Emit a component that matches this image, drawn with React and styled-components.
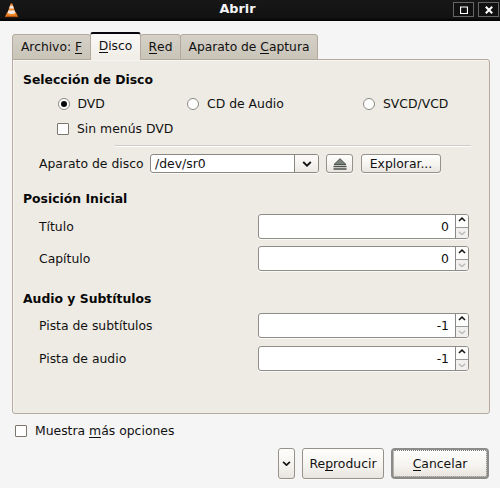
import React from "react";
import styled, { createGlobalStyle } from "styled-components";

const Global = createGlobalStyle`
  * { box-sizing: border-box; }
  body { margin: 0; background: #f5f5f5; overflow: hidden; }
`;

const Dialog = styled.div`
  width: 500px;
  height: 488px;
  background: #f5f5f5;
  color: #111;
  font: 12.4px/16px "DejaVu Sans", sans-serif;
  white-space: nowrap;
`;

const TitleBar = styled.header`
  display: grid;
  grid-template-columns: 46px 1fr 46px;
  height: 21px;
  padding-right: 1px;
  background: linear-gradient(#171717, #121212 85%, #000);
`;

const Cone = styled.svg`
  margin: 3px 0 0 4px;
  width: 15px;
  height: 15px;
`;

const Title = styled.h1`
  margin: 1px 0 0;
  padding-right: 24px;
  text-align: center;
  color: #f4f4f4;
  font-size: 12.8px;
  line-height: 16px;
`;

const WindowButtons = styled.div`
  display: flex;
  justify-content: flex-end;
  gap: 4px;
  padding-top: 2px;
`;

const WindowButton = styled.button`
  display: flex;
  align-items: center;
  justify-content: center;
  width: 21px;
  height: 15px;
  padding: 0;
  border: 1px solid #666;
  background: #111;
`;

const Tabs = styled.nav`
  display: flex;
  align-items: flex-end;
  height: 39px;
  margin: 0 0 -1px 12px;
`;

const Tab = styled.button`
  position: relative;
  width: ${(p) => p.$width}px;
  height: ${(p) => (p.$active ? 28 : 26)}px;
  margin-left: ${(p) => (p.$first ? 0 : -1)}px;
  padding: ${(p) => (p.$active ? "0 0 2px" : "0")};
  border: 1px solid #b3a89b;
  border-top: ${(p) => (p.$active ? "2px solid #08060c" : "1px solid #b3a89b")};
  border-bottom: ${(p) => (p.$active ? "0" : "1px solid #b3a89b")};
  border-radius: 3px 3px 0 0;
  background: ${(p) => (p.$active ? "linear-gradient(#fbfaf8, #f0ede6)" : "linear-gradient(#d5d1c7, #c9c4b8)")};
  color: inherit;
  font: inherit;
  font-size: 12.3px;
  z-index: ${(p) => (p.$active ? 1 : 0)};
`;

const Panel = styled.main`
  width: 478px;
  height: 355px;
  margin-left: 12px;
  padding: 10px 0 0 10px;
  border: 1px solid #b5aa9d;
  border-radius: 0 3px 3px 3px;
  background: #eeebe4;
  box-shadow: inset 1px 1px 0 #f7f5f1;
`;

const Heading = styled.h2`
  height: 20px;
  margin: ${(p) => p.$top || 0}px 0 0;
  color: #080808;
  font-size: 12.4px;
  line-height: 20px;
`;

const Radios = styled.div`
  display: grid;
  grid-template-columns: 129.5px 176px 1fr;
  height: 27px;
  margin-left: 34.5px;
`;

const Choice = styled.label`
  display: flex;
  align-items: center;
  gap: 8px;
`;

const Radio = styled.span`
  display: grid;
  place-items: center;
  width: 12px;
  height: 12px;
  border: 1px solid #8d8984;
  border-radius: 50%;
  background: #fff;
`;

const Dot = styled.i`
  width: 6px;
  height: 6px;
  border-radius: 50%;
  background: #080808;
`;

const Check = styled.span`
  width: 12px;
  height: 12px;
  border: 1px solid #7c766e;
  border-radius: 1px;
  background: #fff;
`;

const CheckRow = styled.div`
  display: flex;
  height: 24px;
  margin-left: 34px;
`;

const Separator = styled.hr`
  width: 356px;
  height: 2px;
  margin: 4px 0 0 92px;
  border: 0;
  border-top: 1px solid #cfccc7;
  background: #fdfdfc;
`;

const DeviceRow = styled.div`
  display: flex;
  align-items: center;
  height: 19px;
  margin: 7px 0 0 16px;
`;

const DeviceLabel = styled.span`
  width: 111px;
`;

const Combo = styled.div`
  display: flex;
  width: 169px;
  height: 19px;
  margin-right: 7px;
  overflow: hidden;
  border: 1px solid #8b8781;
  border-radius: 3px;
  background: #fff;
  box-shadow: 0 1px 0 #faf9f6;
`;

const ComboText = styled.span`
  flex: 1;
  padding-left: 4px;
  line-height: 17px;
`;

const Arrow = styled.span`
  display: grid;
  place-items: center;
  width: 24px;
  border-left: 1px solid #8b8781;
  background: linear-gradient(#fdfcfb, #edeae5);
`;

const Button = styled.button`
  display: flex;
  align-items: center;
  justify-content: center;
  width: ${(p) => p.$width}px;
  height: ${(p) => p.$height || 19}px;
  margin-right: ${(p) => p.$gap || 0}px;
  padding: 0;
  border: 1px solid #96918a;
  border-radius: 3px;
  background: linear-gradient(#fefefd, #f5f3ef 60%, #e8e4de);
  box-shadow: 0 1px 0 #faf9f6;
  color: inherit;
  font: inherit;
`;

const FocusButton = styled(Button)`
  border: 2px solid #8b8b87;
  border-radius: 4px;
  outline: 1px dotted #777;
  outline-offset: -3px;
`;

const SpinRow = styled.div`
  display: flex;
  align-items: center;
  justify-content: space-between;
  width: 430px;
  height: 25px;
  margin: ${(p) => p.$top}px 0 0 16px;
`;

const Spin = styled.div`
  display: flex;
  width: 211px;
  height: 25px;
  overflow: hidden;
  border: 1px solid #8e8d89;
  border-radius: 3px;
  background: #fff;
  box-shadow: 0 1px 0 #faf9f6;
`;

const Value = styled.span`
  flex: 1;
  padding-right: 6px;
  text-align: right;
  line-height: 23px;
`;

const Steps = styled.span`
  display: grid;
  grid-template-rows: 12px 11px;
  width: 13px;
  border-left: 1px solid #888;
`;

const Step = styled.span`
  display: grid;
  place-items: center;
  padding-bottom: ${(p) => (p.$down ? 0 : 3)}px;
  border-top: ${(p) => (p.$down ? "1px solid #999" : "0")};
  background: ${(p) => (p.$down ? "#f1f0ee" : "#fdfdfc")};
`;

const Options = styled.div`
  display: flex;
  height: 24px;
  margin: 5px 0 0 15px;
`;

const Footer = styled.footer`
  display: flex;
  height: 31px;
  margin: 5px 0 0 278px;
`;

const Key = styled.span`
  display: inline-block;
  height: 15px;
  border-bottom: 1px solid #111;
`;

const Chevron = ({ up, muted, size = 9 }) => (
  <svg width={size} height={size * 0.6} viewBox="0 0 10 6">
    <path d={up ? "M1.2 5 5 1.4 8.8 5" : "M1.2 1 5 4.6 8.8 1"} fill="none" stroke={muted ? "#bbb" : "#151515"} strokeWidth="1.9" />
  </svg>
);

const SpinField = ({ label, value, top }) => (
  <SpinRow $top={top}>
    <span>{label}</span>
    <Spin>
      <Value>{value}</Value>
      <Steps>
        <Step><Chevron up size={8} /></Step>
        <Step $down><Chevron muted size={8} /></Step>
      </Steps>
    </Spin>
  </SpinRow>
);

export default function App() {
  return (
    <Dialog>
      <Global />
      <TitleBar>
        <Cone viewBox="0 0 15 15">
          <path d="M3 9.5h9l2 4.3H1z" fill="#e37b20" />
          <path d="M6.7.5h1.6L12 11Q7.5 13.4 3 11z" fill="#f08a32" />
          <path d="M6.1 2.8h2.8l1 2.8H5.1zM4.4 7.6h6.2l.9 2.5q-4 1.8-8 0z" fill="#eee9e4" />
          <path d="M1 13.6h13" stroke="#b85410" />
        </Cone>
        <Title>Abrir</Title>
        <WindowButtons>
          <WindowButton aria-label="Maximizar">
            <svg width="8" height="8" viewBox="0 0 8 8"><path d="M.5 1h7v6.5h-7zM0 1h8" fill="none" stroke="#fff" strokeWidth="1.2" /></svg>
          </WindowButton>
          <WindowButton aria-label="Cerrar">
            <svg width="8" height="8" viewBox="0 0 8 8"><path d="m.8.8 6.4 6.4m0-6.4L.8 7.2" stroke="#fff" strokeWidth="2" /></svg>
          </WindowButton>
        </WindowButtons>
      </TitleBar>
      <Tabs>
        <Tab $first $width={79}>Archivo: <Key>F</Key></Tab>
        <Tab $active $width={51}><Key>D</Key>isco</Tab>
        <Tab $width={41}><Key>R</Key>ed</Tab>
        <Tab $width={138}>Aparato de <Key>C</Key>aptura</Tab>
      </Tabs>
      <Panel>
        <Heading>Selección de Disco</Heading>
        <Radios>
          <Choice><Radio><Dot /></Radio>DVD</Choice>
          <Choice><Radio />CD de Audio</Choice>
          <Choice><Radio />SVCD/VCD</Choice>
        </Radios>
        <CheckRow><Choice><Check />Sin menús DVD</Choice></CheckRow>
        <Separator />
        <DeviceRow>
          <DeviceLabel>Aparato de disco</DeviceLabel>
          <Combo>
            <ComboText>/dev/sr0</ComboText>
            <Arrow><Chevron size={10} /></Arrow>
          </Combo>
          <Button $width={27} $gap={8} aria-label="Expulsar">
            <svg width="14" height="12" viewBox="0 0 14 12">
              <path d="M7 .7 13 6.5H1z" fill="#7c837f" stroke="#414642" strokeWidth=".9" />
              <path d="M.5 8.5h13M.5 11h13" stroke="#4c524e" strokeWidth="1.3" />
            </svg>
          </Button>
          <Button $width={80}>Explorar...</Button>
        </DeviceRow>
        <Heading $top={16}>Posición Inicial</Heading>
        <SpinField label="Título" value="0" top={5} />
        <SpinField label="Capítulo" value="0" top={7} />
        <Heading $top={18}>Audio y Subtítulos</Heading>
        <SpinField label="Pista de subtítulos" value="-1" top={4} />
        <SpinField label="Pista de audio" value="-1" top={8} />
      </Panel>
      <Options>
        <Choice><Check /><span>Muestra <Key>m</Key>ás opciones</span></Choice>
      </Options>
      <Footer>
        <Button $width={17} $height={31} $gap={7} aria-label="Más acciones"><Chevron size={9} /></Button>
        <Button $width={82} $height={31} $gap={7}>Re<Key>p</Key>roducir</Button>
        <FocusButton $width={98} $height={31}><Key>C</Key>ancelar</FocusButton>
      </Footer>
    </Dialog>
  );
}
